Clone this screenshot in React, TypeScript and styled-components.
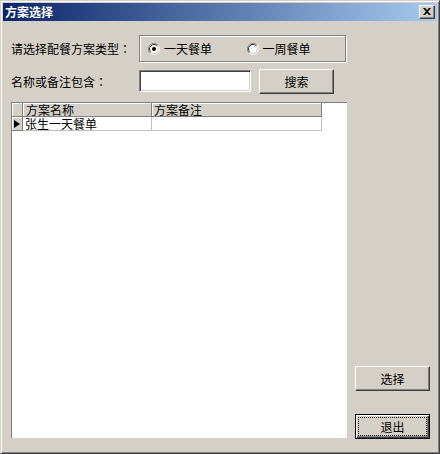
import React from 'react';
import styled, { createGlobalStyle } from 'styled-components';

const Global = createGlobalStyle`
  html, body { margin: 0; padding: 0; background: #d4d0c8; }
  body {
    font-family: "Noto Sans CJK SC", "Liberation Sans", sans-serif;
    font-size: 12px;
    color: #000;
  }
  * { box-sizing: border-box; }
`;

const Window = styled.div`
  width: 440px;
  height: 454px;
  background: #d4d0c8;
  border: 1px solid;
  border-color: #d4d0c8 #404040 #404040 #d4d0c8;
  box-shadow: inset 1px 1px #fff, inset -1px -1px #808080;
  padding: 2px;
  display: flex;
  flex-direction: column;
`;

const TitleBar = styled.div`
  height: 18px;
  flex: none;
  background: linear-gradient(to right, #0a246a, #a6caf0);
  display: flex;
  align-items: center;
  justify-content: space-between;
  padding: 0 2px 0 2px;
`;

const Title = styled.span`
  color: #fff;
  font-weight: bold;
  font-size: 12px;
  line-height: 18px;
`;

const CloseButton = styled.div`
  width: 16px;
  height: 14px;
  background: #d4d0c8;
  border: 1px solid;
  border-color: #fff #404040 #404040 #fff;
  box-shadow: inset -1px -1px #808080;
  display: flex;
  align-items: center;
  justify-content: center;
  padding-right: 1px;
  padding-bottom: 1px;
`;

const Body = styled.div`
  flex: 1;
  display: flex;
  padding-left: 8px;
`;

const LeftColumn = styled.div`
  width: 336px;
  display: flex;
  flex-direction: column;
  padding-top: 14px;
`;

const FormRow = styled.div<{ $top?: number; $height: number }>`
  display: flex;
  align-items: flex-start;
  height: ${(p) => p.$height}px;
  margin-top: ${(p) => p.$top ?? 0}px;
`;

const FieldLabel = styled.span<{ $offset: number }>`
  width: 128px;
  flex: none;
  line-height: 14px;
  margin-top: ${(p) => p.$offset}px;
  white-space: nowrap;
`;

const Colon = styled.span`
  font-family: "Noto Sans CJK JP", "Noto Sans CJK SC", sans-serif;
`;

const GroupBox = styled.div`
  width: 207px;
  height: 27px;
  border: 1px solid #808080;
  box-shadow: inset 1px 1px #fff, 1px 1px #fff;
  display: flex;
  align-items: center;
  padding-left: 8px;
  padding-top: 1px;
`;

const RadioItem = styled.label`
  width: 99px;
  display: flex;
  align-items: center;
  gap: 4px;
  line-height: 14px;
`;

const TextInput = styled.div`
  width: 112px;
  height: 22px;
  margin-top: 1px;
  background: #fff;
  border: 1px solid;
  border-color: #808080 #fff #fff #808080;
  box-shadow: inset 1px 1px #404040, inset -1px -1px #d4d0c8;
`;

const Button = styled.div<{ $width: number; $isDefault?: boolean; $left?: number }>`
  width: ${(p) => p.$width}px;
  height: 25px;
  flex: none;
  margin-left: ${(p) => p.$left ?? 0}px;
  background: #d4d0c8;
  display: flex;
  padding: 2px;
  border: 1px solid;
  border-color: ${(p) => (p.$isDefault ? '#000' : '#fff #404040 #404040 #fff')};
  box-shadow: ${(p) =>
    p.$isDefault
      ? 'inset 1px 1px #fff, inset -1px -1px #404040, inset -2px -2px #808080'
      : 'inset -1px -1px #808080'};
`;

const ButtonFace = styled.span<{ $focus?: boolean }>`
  flex: 1;
  display: flex;
  align-items: center;
  justify-content: center;
  font-size: 12px;
  line-height: 14px;
  border: 1px dotted ${(p) => (p.$focus ? '#000' : 'transparent')};
  padding-top: 1px;
`;

const Grid = styled.div`
  margin-top: 7px;
  width: 336px;
  height: 336px;
  background: #fff;
  border-top: 1px solid #808080;
  border-left: 1px solid #808080;
  display: grid;
  grid-template-columns: 11px 129px 170px;
  grid-auto-rows: 14px;
  align-content: start;
`;

const HeaderCell = styled.div<{ $pad?: number }>`
  background: #d4d0c8;
  border-right: 1px solid #808080;
  border-bottom: 1px solid #808080;
  box-shadow: inset 1px 1px #fff;
  font-size: 12px;
  line-height: 13px;
  padding-left: ${(p) => p.$pad ?? 0}px;
  white-space: nowrap;
`;

const RowHeaderCell = styled.div`
  background: #d4d0c8;
  border-right: 1px solid #808080;
  border-bottom: 1px solid #808080;
  box-shadow: inset 1px 1px #fff;
  display: flex;
  align-items: center;
  padding-left: 2px;
`;

const DataCell = styled.div<{ $pad?: number }>`
  background: #fff;
  border-right: 1px solid #c0c0c0;
  border-bottom: 1px solid #c0c0c0;
  font-size: 12px;
  line-height: 13px;
  padding-left: ${(p) => p.$pad ?? 0}px;
  white-space: nowrap;
`;

const RightColumn = styled.div`
  margin-left: 8px;
  width: 75px;
  display: flex;
  flex-direction: column;
  justify-content: flex-end;
  gap: 23px;
  padding-bottom: 12px;
`;

const Radio: React.FC<{ checked?: boolean }> = ({ checked }) => (
  <svg width="12" height="12" viewBox="0 0 12 12">
    <circle cx="6" cy="6" r="4.2" fill="#fff" />
    <path d="M2.11 9.89 A5.5 5.5 0 0 1 9.89 2.11" stroke="#808080" fill="none" />
    <path d="M9.89 2.11 A5.5 5.5 0 0 1 2.11 9.89" stroke="#fff" fill="none" />
    <path d="M2.82 9.18 A4.5 4.5 0 0 1 9.18 2.82" stroke="#404040" fill="none" />
    <path d="M9.18 2.82 A4.5 4.5 0 0 1 2.82 9.18" stroke="#d4d0c8" fill="none" />
    {checked && <circle cx="6" cy="6" r="2" fill="#000" />}
  </svg>
);

export default function App() {
  return (
    <>
      <Global />
      <Window>
        <TitleBar>
          <Title>方案选择</Title>
          <CloseButton>
            <svg width="8" height="7" viewBox="0 0 8 7">
              <path d="M0 0h2l2 2 2-2h2L5 3.5 8 7H6L4 5 2 7H0l3-3.5z" fill="#000" />
            </svg>
          </CloseButton>
        </TitleBar>
        <Body>
          <LeftColumn>
            <FormRow $height={28}>
              <FieldLabel $offset={7}>
                请选择配餐方案类型<Colon>：</Colon>
              </FieldLabel>
              <GroupBox>
                <RadioItem>
                  <Radio checked />
                  一天餐单
                </RadioItem>
                <RadioItem>
                  <Radio />
                  一周餐单
                </RadioItem>
              </GroupBox>
            </FormRow>
            <FormRow $top={6} $height={26}>
              <FieldLabel $offset={6}>
                名称或备注包含<Colon>：</Colon>
              </FieldLabel>
              <TextInput />
              <Button $width={75} $left={8}>
                <ButtonFace>搜索</ButtonFace>
              </Button>
            </FormRow>
            <Grid>
              <HeaderCell />
              <HeaderCell $pad={3}>方案名称</HeaderCell>
              <HeaderCell $pad={2}>方案备注</HeaderCell>
              <RowHeaderCell>
                <svg width="6" height="8" viewBox="0 0 6 8">
                  <polygon points="0,0 6,4 0,8" fill="#000" />
                </svg>
              </RowHeaderCell>
              <DataCell $pad={2}>张生一天餐单</DataCell>
              <DataCell />
            </Grid>
          </LeftColumn>
          <RightColumn>
            <Button $width={75}>
              <ButtonFace>选择</ButtonFace>
            </Button>
            <Button $width={75} $isDefault>
              <ButtonFace $focus>退出</ButtonFace>
            </Button>
          </RightColumn>
        </Body>
      </Window>
    </>
  );
}
